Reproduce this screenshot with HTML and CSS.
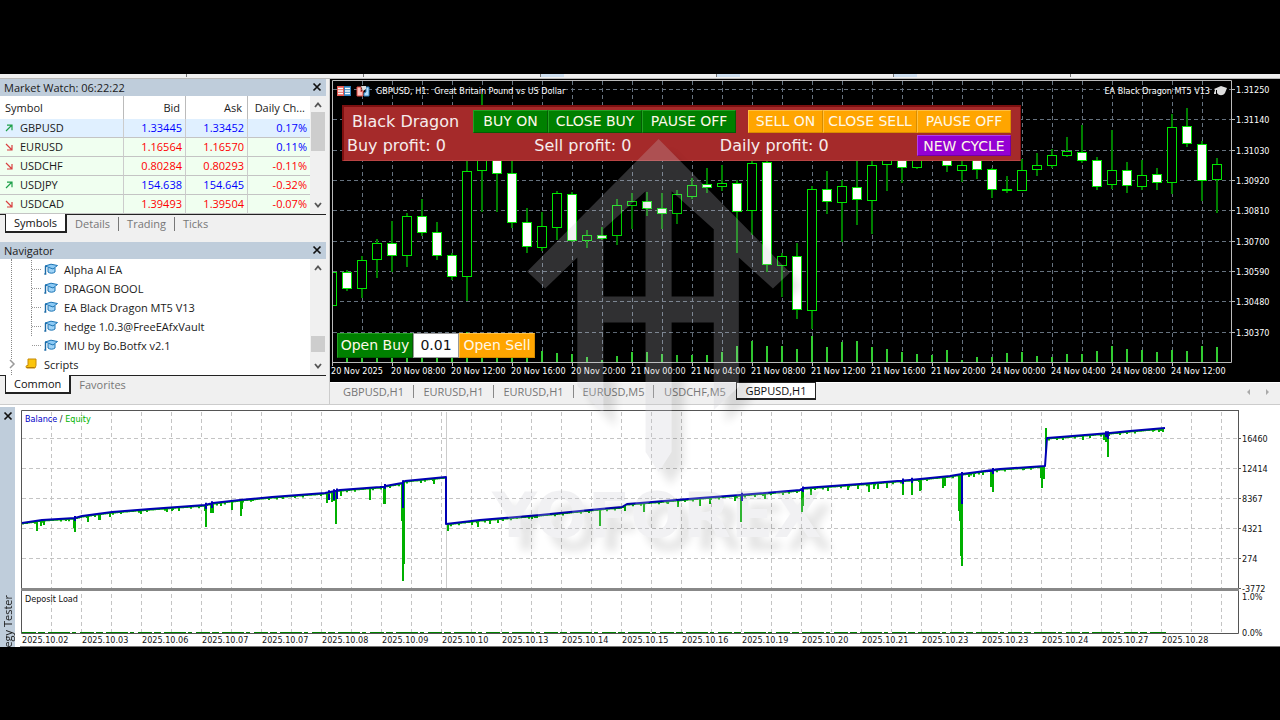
FILE: index.html
```html
<!DOCTYPE html>
<html lang="en">
<head>
<meta charset="utf-8">
<title>Trading terminal</title>
<link rel="stylesheet" href="styles.css">
</head>
<body>
<svg class="symbols" aria-hidden="true">
  <defs>
    <symbol id="up" viewBox="0 0 8 8"><path d="M1 7 7 1M2 1.2h5v5" fill="none" stroke="#1ea04a" stroke-width="1.2"/></symbol>
    <symbol id="down" viewBox="0 0 8 8"><path d="M1 1l6 6M7 2v5H2" fill="none" stroke="#d84040" stroke-width="1.2"/></symbol>
    <symbol id="cross" viewBox="0 0 10 10"><path d="M1.5 1.5l7 7M8.5 1.5l-7 7" fill="none" stroke="#111" stroke-width="1.7"/></symbol>
    <symbol id="chev-up" viewBox="0 0 10 10"><path d="M2 7l3-3.5L8 7" fill="none" stroke="#555" stroke-width="1.8"/></symbol>
    <symbol id="chev-down" viewBox="0 0 10 10"><path d="M2 3l3 3.5L8 3" fill="none" stroke="#555" stroke-width="1.8"/></symbol>
    <symbol id="cap" viewBox="0 0 14 12">
      <path d="M4 5v4c2 1.600 5 1.600 7 0V5" fill="#9fd3f7" stroke="#1c74b4"/>
      <path d="M1 3 7 1.200l6.500 1.300-4.500 3.500z" fill="#8ccaf5" stroke="#1c74b4"/>
      <path d="M1.500 3v7.500M.3 11h2" fill="none" stroke="#1c6aa6" stroke-width="1.4"/>
    </symbol>
    <symbol id="scroll" viewBox="0 0 12 12"><path d="M3 1h8v6.500L10 10H2C.7 10 .7 7.500 2 7.500h1z" fill="#fbc50d" stroke="#c58a08"/><path d="M1.500 9.500h8" stroke="#b57a05"/></symbol>
  </defs>
</svg>

<main class="terminal">
  <div class="toolbar-edge"><i></i><i></i><i></i><i></i><i></i><i></i></div>

  <div class="workspace">
    <aside class="sidebar">
      <section class="dock">
        <header class="dock-title"><h2>Market Watch: 06:22:22</h2><button class="close" aria-label="Close Market Watch"><svg><use href="#cross"/></svg></button></header>
        <div class="dock-body">
          <table class="quotes">
            <thead><tr><th>Symbol</th><th>Bid</th><th>Ask</th><th>Daily Ch...</th></tr></thead>
            <tbody>
              <tr class="selected"><td><svg><use href="#up"/></svg>GBPUSD</td><td class="rise">1.33445</td><td class="rise">1.33452</td><td class="rise">0.17%</td></tr>
              <tr><td><svg><use href="#down"/></svg>EURUSD</td><td class="fall">1.16564</td><td class="fall">1.16570</td><td class="rise">0.11%</td></tr>
              <tr><td><svg><use href="#down"/></svg>USDCHF</td><td class="fall">0.80284</td><td class="fall">0.80293</td><td class="fall">-0.11%</td></tr>
              <tr><td><svg><use href="#up"/></svg>USDJPY</td><td class="rise">154.638</td><td class="rise">154.645</td><td class="fall">-0.32%</td></tr>
              <tr><td><svg><use href="#down"/></svg>USDCAD</td><td class="fall">1.39493</td><td class="fall">1.39504</td><td class="fall">-0.07%</td></tr>
            </tbody>
          </table>
          <div class="scrollbar"><svg><use href="#chev-up"/></svg><b class="thumb thumb-top"></b><svg><use href="#chev-down"/></svg></div>
        </div>
        <nav class="tabs"><button class="tab active">Symbols</button><button class="tab">Details</button><button class="tab">Trading</button><button class="tab">Ticks</button></nav>
      </section>

      <section class="dock">
        <header class="dock-title"><h2>Navigator</h2><button class="close" aria-label="Close Navigator"><svg><use href="#cross"/></svg></button></header>
        <div class="dock-body">
          <ul class="tree">
            <li><svg><use href="#cap"/></svg>Alpha AI EA</li>
            <li><svg><use href="#cap"/></svg>DRAGON BOOL</li>
            <li><svg><use href="#cap"/></svg>EA Black Dragon MT5 V13</li>
            <li><svg><use href="#cap"/></svg>hedge 1.0.3@FreeEAfxVault</li>
            <li class="last"><svg><use href="#cap"/></svg>IMU by Bo.Botfx v2.1</li>
            <li class="folder"><svg class="expander" viewBox="0 0 8 10"><path d="M2 1l4 4-4 4" fill="none" stroke="#999" stroke-width="1.5"/></svg><svg class="folder-icon"><use href="#scroll"/></svg>Scripts</li>
          </ul>
          <div class="scrollbar"><svg><use href="#chev-up"/></svg><b class="thumb thumb-low"></b><svg><use href="#chev-down"/></svg></div>
        </div>
        <nav class="tabs"><button class="tab active">Common</button><button class="tab">Favorites</button></nav>
      </section>
    </aside>

    <section class="charting">
      <div class="chart-window">
        <svg class="price-chart" id="price" viewBox="330 79 950 303" role="img" aria-label="GBPUSD H1 candlestick chart"></svg>

        <div class="ea-panel">
          <div class="ea-row">
            <span class="ea-name">Black Dragon</span>
            <div class="ea-group"><button class="ea-btn green">BUY ON</button><button class="ea-btn green wide">CLOSE BUY</button><button class="ea-btn green wide">PAUSE OFF</button></div>
            <div class="ea-group"><button class="ea-btn orange">SELL ON</button><button class="ea-btn orange wide">CLOSE SELL</button><button class="ea-btn orange wide">PAUSE OFF</button></div>
          </div>
          <div class="ea-row profits"><span>Buy profit: 0</span><span>Sell profit: 0</span><span>Daily profit: 0</span><button class="ea-btn violet wide">NEW CYCLE</button></div>
        </div>

        <div class="order-panel">
          <button class="ea-btn green order">Open Buy</button>
          <input class="lots" type="text" value="0.01" aria-label="Lots">
          <button class="ea-btn orange order">Open Sell</button>
        </div>
      </div>
      <nav class="chart-tabs">
        <button class="ctab">GBPUSD,H1</button><button class="ctab">EURUSD,H1</button><button class="ctab">EURUSD,H1</button><button class="ctab">EURUSD,M5</button><button class="ctab">USDCHF,M5</button><button class="ctab active">GBPUSD,H1</button>
        <svg class="pager" viewBox="0 0 24 8"><path d="M4 1v6L1 4zM20 1v6l3-3z" fill="#aaa"/></svg>
      </nav>
    </section>
  </div>

  <section class="tester">
    <div class="tester-bar"><button class="close" aria-label="Close Strategy Tester"><svg><use href="#cross"/></svg></button><span>Strategy Tester</span></div>
    <svg class="tester-chart" id="tester" viewBox="20 406 1260 240" role="img" aria-label="Balance and equity graph"></svg>
  </section>

  <svg class="watermark" viewBox="480 130 370 430" aria-hidden="true">
    <g class="wm-face">
      <path d="M658 138 789 271 772 287 738 256V385L713 408V321H671V450L658 470 645 450V321H603V412L577 384V256L545 287 527 270ZM645 190 603 228V295H645ZM671 190V295H713V228Z" fill-rule="evenodd"/>
      <text x="492" y="535">YOFOREX</text>
    </g>
  </svg>
</main>
<script src="charts.js"></script>
</body>
</html>
```

FILE: styles.css
```css
* { box-sizing: border-box; }
body { margin: 0; min-height: 100vh; background: #000; display: flex; flex-direction: column; justify-content: center; font-family: "Open Sans", "Noto Sans", sans-serif; font-size: 11px; color: #1a1a1a; }
button, input { font: inherit; color: inherit; margin: 0; padding: 0; border: 0; background: none; }
h2, ul { margin: 0; padding: 0; font: inherit; list-style: none; }
.symbols { position: absolute; width: 0; height: 0; }
.terminal { position: relative; background: #f0f0f0; }

.toolbar-edge { height: 5px; display: flex; justify-content: space-around; padding: 0 110px; border-bottom: 1px solid #b8b8b8; }
.toolbar-edge i { width: 24px; height: 3px; border-left: 1px solid #777; }
.toolbar-edge i:nth-child(n+3) { background: #cfe0f0; }
.toolbar-edge i:last-child { background: none; }

.workspace { display: grid; grid-template-columns: 330px minmax(0, 1fr); border-bottom: 1px solid #ccc; }
.sidebar { display: flex; flex-direction: column; gap: 8px; padding-right: 3px; border-right: 1px solid #ccc; }
.dock-title { height: 17px; padding: 0 4px; display: flex; align-items: center; justify-content: space-between; background: #bfcddb; }
.close { display: flex; }
.close svg { width: 10px; height: 10px; }
.dock-body { display: grid; grid-template-columns: minmax(0, 1fr) 16px; background: #fff; border-bottom: 1px solid #222; }

.quotes { width: 100%; table-layout: fixed; border-collapse: separate; border-spacing: 0; }
.quotes th { height: 23px; font-weight: 400; text-align: right; padding: 0 5px; border-right: 1px solid #bbb; white-space: nowrap; }
.quotes th:first-child { width: 124px; text-align: left; }
.quotes th:last-child, .quotes td:last-child { border-right: 0; }
.quotes td { height: 19px; line-height: 17px; text-align: right; padding: 0 3px; background: #f0fff0; border-right: 1px solid #ccc; border-bottom: 1px solid #c4c4c4; }
.quotes td:first-child { text-align: left; padding-left: 5px; }
.quotes td svg { width: 8px; height: 8px; margin-right: 7px; }
.quotes .selected td { background: #e0f0ff; }
.rise { color: #00f; }
.fall { color: #f00; }

.scrollbar { display: flex; flex-direction: column; align-items: center; background: #f0f0f0; padding: 4px 0; }
.scrollbar svg { width: 10px; height: 10px; }
.thumb { width: 14px; background: #cdcdcd; }
.thumb-top { height: 39px; margin: 2px 0 auto; }
.thumb-low { height: 16px; margin: auto 0 9px; }

.tabs { height: 19px; display: flex; padding-left: 5px; color: #777; }
.tab { padding: 0 8px; height: 14px; line-height: 14px; margin-top: 2px; }
.tab + .tab + .tab { border-left: 1px solid #777; }
.tab.active { height: 19px; line-height: 17px; margin-top: -1px; background: #fff; color: #111; border: 1px solid #222; border-width: 0 2px 2px 1px; }

.tree { position: relative; padding: 1px 0; }
.tree::before { content: ""; position: absolute; left: 11px; top: 0; bottom: 0; border-left: 1px dotted #888; }
.tree li { height: 19px; display: flex; align-items: center; margin-left: 31px; border-left: 1px dotted #888; }
.tree li::before { content: ""; width: 9px; margin: 0 3px 0 0; border-top: 1px dotted #999; }
.tree li svg { width: 14px; height: 12px; margin-right: 6px; }
.tree .last { border-left-color: transparent; }
.tree .folder { margin-left: 8px; border: 0; }
.tree .folder::before { content: none; }
.tree .folder .expander { width: 8px; height: 10px; margin: 0; position: relative; background: #fff; }
.tree .folder .folder-icon { width: 12px; margin: 0 7px 0 9px; }

.charting { min-width: 0; }
.chart-window { position: relative; background: #000; }
.price-chart, .tester-chart { display: block; width: 100%; height: auto; }
.price-chart text { font: 9px "DejaVu Sans Condensed", "Noto Sans", sans-serif; fill: #fff; }
.price-chart .grid { stroke: #66727f; stroke-dasharray: 4 3; }
.price-chart .frame { stroke: #bbb; fill: none; }
.wick { stroke: #008000; stroke-width: 2; }
.candle { stroke: #00e600; fill: #000; }
.candle.solid { fill: #fff; }
.volume { stroke: #32cd32; stroke-width: 2; }

.ea-panel { position: absolute; left: 12px; top: 26px; width: 679px; padding: 3px 9px 1px 3px; background: #a52a2a; border: 1px solid #7d1010; border-width: 2px 1px 1px 2px; border-bottom-color: #b94444; color: #f6ecec; font: 16px "DejaVu Sans", sans-serif; }
.ea-row { display: flex; align-items: center; justify-content: space-between; height: 23px; padding-left: 5px; }
.ea-row.profits { height: 26px; padding-left: 0; }
.ea-name { width: 109px; }
.ea-group { display: flex; }
.ea-btn { width: 75px; height: 23px; font: 14px "DejaVu Sans", sans-serif; white-space: nowrap; color: #fff8e8; border: 1px solid; }
.ea-btn.wide { width: 94px; }
.ea-btn.green { background: #008000; border-color: #22a022 #055c05 #055c05 #22a022; }
.ea-btn.orange { background: #ffa500; border-color: #ffc040 #d88c00 #d88c00 #ffc040; }
.ea-btn.violet { background: #9400d3; border-color: #b040ea #7300a5 #7300a5 #b040ea; height: 21px; }
.order-panel { position: absolute; left: 7px; bottom: 24px; display: flex; }
.ea-btn.order { width: 76px; height: 25px; }
.lots { width: 46px; height: 25px; background: #fff; border: 1px solid #999; text-align: center; font: 14px "DejaVu Sans", sans-serif; color: #111; }

.chart-tabs { height: 22px; display: flex; align-items: flex-start; padding-left: 4px; border-top: 1px solid #fff; color: #777; }
.ctab { width: 80px; height: 13px; line-height: 13px; margin-top: 2px; border-right: 1px solid #888; }
.ctab:nth-child(5) { border-right: 0; width: 82px; }
.ctab.active { height: 18px; line-height: 15px; margin-top: -1px; background: #fff; color: #111; border: 1px solid #222; border-bottom-width: 2px; }
.pager { width: 24px; height: 8px; margin: 5px 10px 0 auto; }

.tester { display: grid; grid-template-columns: 15px minmax(0, 1fr); column-gap: 5px; background: #fff; border-top: 2px solid #fff; }
.tester-bar { contain: size; overflow: hidden; background: #bfcddb; display: flex; flex-direction: column; align-items: center; padding-top: 4px; }
.tester-bar span { writing-mode: vertical-rl; transform: rotate(180deg); margin-top: 174px; white-space: nowrap; }
.tester-chart text { font: 9px "DejaVu Sans Condensed", "Noto Sans", sans-serif; fill: #111; }
.tester-chart .grid { stroke: #c4c4c4; stroke-dasharray: 4 3; }
.tester-chart .frame { stroke: #555; fill: none; }
.balance { stroke: #0000b4; stroke-width: 2; fill: none; stroke-linejoin: round; }
.equity { stroke: #00b000; stroke-width: 2; fill: none; }

/* brand mark over the whole terminal */
.watermark { position: absolute; left: 37.5%; top: 57px; width: 29%; overflow: visible; pointer-events: none; }
.watermark text { font: bold 62px "DejaVu Sans", sans-serif; }
.wm-face { fill: #c8c8d0; opacity: .24; filter: drop-shadow(12px 13px 4px rgba(0, 0, 0, .45)); }
```

FILE: charts.js
```js
const NS = 'http://www.w3.org/2000/svg';
function add(parent, tag, attrs, text) {
  const el = document.createElementNS(NS, tag);
  for (const key in attrs) el.setAttribute(key, attrs[key]);
  if (text !== undefined) el.textContent = text;
  parent.appendChild(el);
  return el;
}
const line = (p, cls, x1, y1, x2, y2) => add(p, 'line', { class: cls, x1, y1, x2, y2 });

/* ---- price chart: [solid, top, bottom, high, low, volume top] ---- */
const candles = [
[0,272,306,272,306,362],[1,272,289,270,291,355],[0,260,289,256,298,355],[0,243,260,239,278,355],[1,243,256,221,272,355],
[0,216,256,213,267,355],[1,216,233,199,236,355],[1,232,256,222,260,355],[1,255,277,253,280,355],[0,171,277,155,301,332],
[0,140,171,94,212,355],[1,140,174,120,212,355],[1,173,223,160,228,355],[1,222,247,208,253,355],[0,226,248,212,251,351],
[0,193,228,191,240,353],[1,194,241,192,242,354],[0,235,241,230,248,357],[1,235,239,227,240,360],[0,205,236,199,245,356],
[0,201,206,193,229,352],[1,201,209,192,216,352],[1,208,214,193,229,354],[0,194,214,190,224,355],[0,185,197,178,199,355],
[1,184,188,168,193,355],[0,183,187,165,191,352],[1,183,212,180,253,346],[0,163,211,160,235,341],[1,162,265,158,272,346],
[0,256,266,253,297,346],[1,256,310,243,319,349],[0,189,311,186,329,336],[1,189,202,171,214,347],[0,186,203,180,242,342],
[1,187,200,160,225,341],[0,165,201,160,234,347],[0,150,165,150,191,349],[1,150,168,150,183,352],[0,150,168,150,169,354],
[0,150,158,150,160,355],[1,150,166,150,172,350],[0,165,171,160,182,360],[1,158,170,150,179,357],[1,169,190,168,198,357],
[0,189,190,176,193,353],[0,170,191,159,191,352],[0,165,170,153,176,356],[0,155,166,149,168,357],[0,151,156,137,157,354],
[1,152,161,125,163,354],[1,160,187,157,190,351],[0,170,185,130,189,346],[1,170,186,162,193,349],[0,175,187,160,190,350],
[1,174,183,168,190,352],[0,127,183,114,194,350],[1,126,144,108,147,351],[1,144,181,141,201,346],[0,164,180,158,213,347]];

const price = document.getElementById('price');
const priceRows = [[89,'1.31250'],[119,'1.31140'],[150,'1.31030'],[180,'1.30920'],[210,'1.30810'],[241,'1.30700'],[271,'1.30590'],[301,'1.30480'],[332,'1.30370']];
for (let x = 362; x < 1230; x += 30) line(price, 'grid', x + .5, 81, x + .5, 361);
for (const [y, label] of priceRows) {
  line(price, 'grid', 333, y + .5, 1231, y + .5);
  line(price, 'frame', 1231, y + .5, 1235, y + .5);
  add(price, 'text', { x: 1236, y: y + 4 }, label);
}
candles.forEach(([solid, top, bottom, high, low, vol], i) => {
  const x = 332 + 15 * i;
  if (vol < 362) line(price, 'volume', x, vol, x, 362);
  line(price, 'wick', x, high, x, low);
  add(price, 'rect', { class: solid ? 'candle solid' : 'candle', x: x - 4.5, y: top + .5, width: 9, height: Math.max(bottom - top - 1, 1) });
});
add(price, 'rect', { x: 330, y: 79, width: 2, height: 303, fill: '#000' });
add(price, 'path', { class: 'frame', d: 'M332.5 362V80.500H1231.500V362.500H332.500' });
const times = ['20 Nov 2025','20 Nov 08:00','20 Nov 12:00','20 Nov 16:00','20 Nov 20:00','21 Nov 00:00','21 Nov 04:00','21 Nov 08:00','21 Nov 12:00','21 Nov 16:00','21 Nov 20:00','24 Nov 00:00','24 Nov 04:00','24 Nov 08:00','24 Nov 12:00'];
times.forEach((t, i) => {
  line(price, 'frame', 332.5 + 60 * i, 362, 332.5 + 60 * i, 366);
  add(price, 'text', { x: 331 + 60 * i, y: 374 }, t);
});
add(price, 'text', { x: 376, y: 94 }, 'GBPUSD, H1:\u00a0 Great Britain Pound vs US Dollar');
add(price, 'text', { x: 1210, y: 94, 'text-anchor': 'end' }, 'EA Black Dragon MT5 V13');
/* depth-of-market, one-click trading and expert icons */
add(price, 'path', { d: 'M337 86h7v10h-7z', fill: '#e5584f' });
add(price, 'path', { d: 'M344 86h7v10h-7z', fill: '#2f80bd' });
add(price, 'path', { d: 'M338 88.500h5M338 91h5M338 93.500h5M345 88.500h5M345 91h5M345 93.500h5', stroke: '#fff', 'stroke-width': 1.5 });
add(price, 'path', { d: 'M357 87h4v5l2-2v6h-6z', fill: '#ffc2bd', stroke: '#d9443c' });
add(price, 'path', { d: 'M369 87h-3v5l-2 1v3h5z', fill: '#b5ddfa', stroke: '#2f80bd' });
add(price, 'path', { d: 'M361 86h5v3l-3 2z', fill: '#ddd' });
add(price, 'path', { d: 'M1214 89l7-3 6 2-2 5c-2 3-6 3-8 0v-3h-1v4h-2v-1l1-3z', fill: '#ddd' });

/* ---- strategy tester graph ---- */
const tester = document.getElementById('tester');
for (let x = 52; x < 1230; x += 30) line(tester, 'grid', x - .5, 411, x - .5, 631);
[[437,'16460'],[467,'12414'],[497,'8367'],[527,'4321'],[557,'274'],[587,'-3772']].forEach(([y, label]) => {
  if (y < 580) line(tester, 'grid', 22, y + .5, 1237, y + .5);
  line(tester, 'frame', 1238, y + .5, 1241, y + .5);
  add(tester, 'text', { x: 1242, y: y + 4 }, label);
});
line(tester, 'frame', 446.5, 411, 446.5, 587).style.stroke = '#ccc';

const balance = [[22,522],[42,519],[75,517],[82,515],[112,511],[150,508],[205,504],[213,502],[240,499],[272,496],[325,492],[340,489],[380,486],[402,482],[405,480],[446,476],[446,523],[480,519],[540,514],[600,508],[622,506],[627,503],[640,502],[700,497],[740,494],[800,489],[804,487],[860,483],[910,479],[950,475],[962,473],[985,470],[1000,468],[1045,465],[1047,437],[1060,436],[1110,432],[1130,430],[1165,427]];
const spikes = [[37,530],[41,525],[44,524],[66,520],[74,527],[75,531],[88,521],[99,519],[100,519],[110,516],[141,513],[167,511],[172,510],[179,510],[205,510],[206,526],[211,512],[213,512],[221,505],[232,509],[241,515],[242,508],[253,500],[283,498],[327,502],[329,498],[332,501],[334,500],[336,523],[341,495],[370,499],[384,503],[385,503],[390,487],[402,520],[403,580],[404,563],[421,482],[434,483],[448,530],[472,524],[478,526],[490,523],[498,522],[517,518],[532,518],[535,517],[600,525],[625,510],[644,511],[668,503],[678,506],[700,505],[710,503],[735,500],[741,521],[755,496],[765,498],[783,494],[802,511],[803,505],[811,494],[828,490],[848,489],[858,488],[869,491],[874,488],[878,488],[887,487],[903,494],[912,494],[920,490],[921,489],[943,487],[945,485],[959,510],[960,520],[962,565],[961,555],[969,476],[974,476],[983,474],[991,486],[993,491],[1024,469],[1041,477],[1042,487],[1044,478],[1046,427],[1063,439],[1083,439],[1090,437],[1104,439],[1106,441],[1108,456],[1120,434],[1154,430],[1159,431],[1163,431]];
function level(x) {
  for (let i = 1; i < balance.length; i++) {
    const [x0, y0] = balance[i - 1], [x1, y1] = balance[i];
    if (x <= x1) return y0 + (y1 - y0) * (x - x0) / (x1 - x0);
  }
  return 427;
}
let equity = '';
for (let x = 23; x < 1165; x += 2) {
  if (x === 447 || x === 1045) continue;
  const dip = 1.6 + (x * x % 13 === 3 ? 1.2 : 0);
  equity += `M${x} ${level(x).toFixed(1)}v${dip.toFixed(1)}`;
}
for (const [x, y] of spikes) equity += `M${x} ${level(x).toFixed(1)}V${y}`;
add(tester, 'path', { class: 'equity', d: equity });
const blueDips = [[75,520],[206,508],[212,507],[329,499],[334,499],[337,498],[385,488],[403,507],[742,500],[803,491],[962,503],[993,473],[1106,436],[1108,438],[912,482],[903,483]];
add(tester, 'path', { class: 'balance', d: 'M' + balance.map(p => p.join(' ')).join('L') + blueDips.map(([x, y]) => `M${x} ${level(x) - 2}V${y}`).join('') });

add(tester, 'path', { class: 'frame', d: 'M1238.500 409.500H21.500V632.500M1238.500 409V632.500H21.500' });
add(tester, 'path', { d: 'M21 588.500H1239', stroke: '#888', 'stroke-width': 3 });
add(tester, 'path', { d: 'M22 631.500H1166', stroke: '#008000', 'stroke-dasharray': '14 2 7 3 22 2 4 4', fill: 'none' });
const label = add(tester, 'text', { x: 25, y: 421 });
add(label, 'tspan', { fill: '#0000c8' }, 'Balance');
add(label, 'tspan', {}, ' / ');
add(label, 'tspan', { fill: '#00b400' }, 'Equity');
add(tester, 'text', { x: 25, y: 601 }, 'Deposit Load');
add(tester, 'text', { x: 1242, y: 599 }, '1.0%');
add(tester, 'text', { x: 1242, y: 635 }, '0.0%');
['02','03','06','07','07','08','09','10','13','14','15','16','19','20','21','23','23','24','27','28'].forEach((d, i) =>
  add(tester, 'text', { x: 22 + 60 * i, y: 642 }, '2025.10.' + d));
add(tester, 'path', { d: 'M20 645.500H1280', stroke: '#777' });
```
